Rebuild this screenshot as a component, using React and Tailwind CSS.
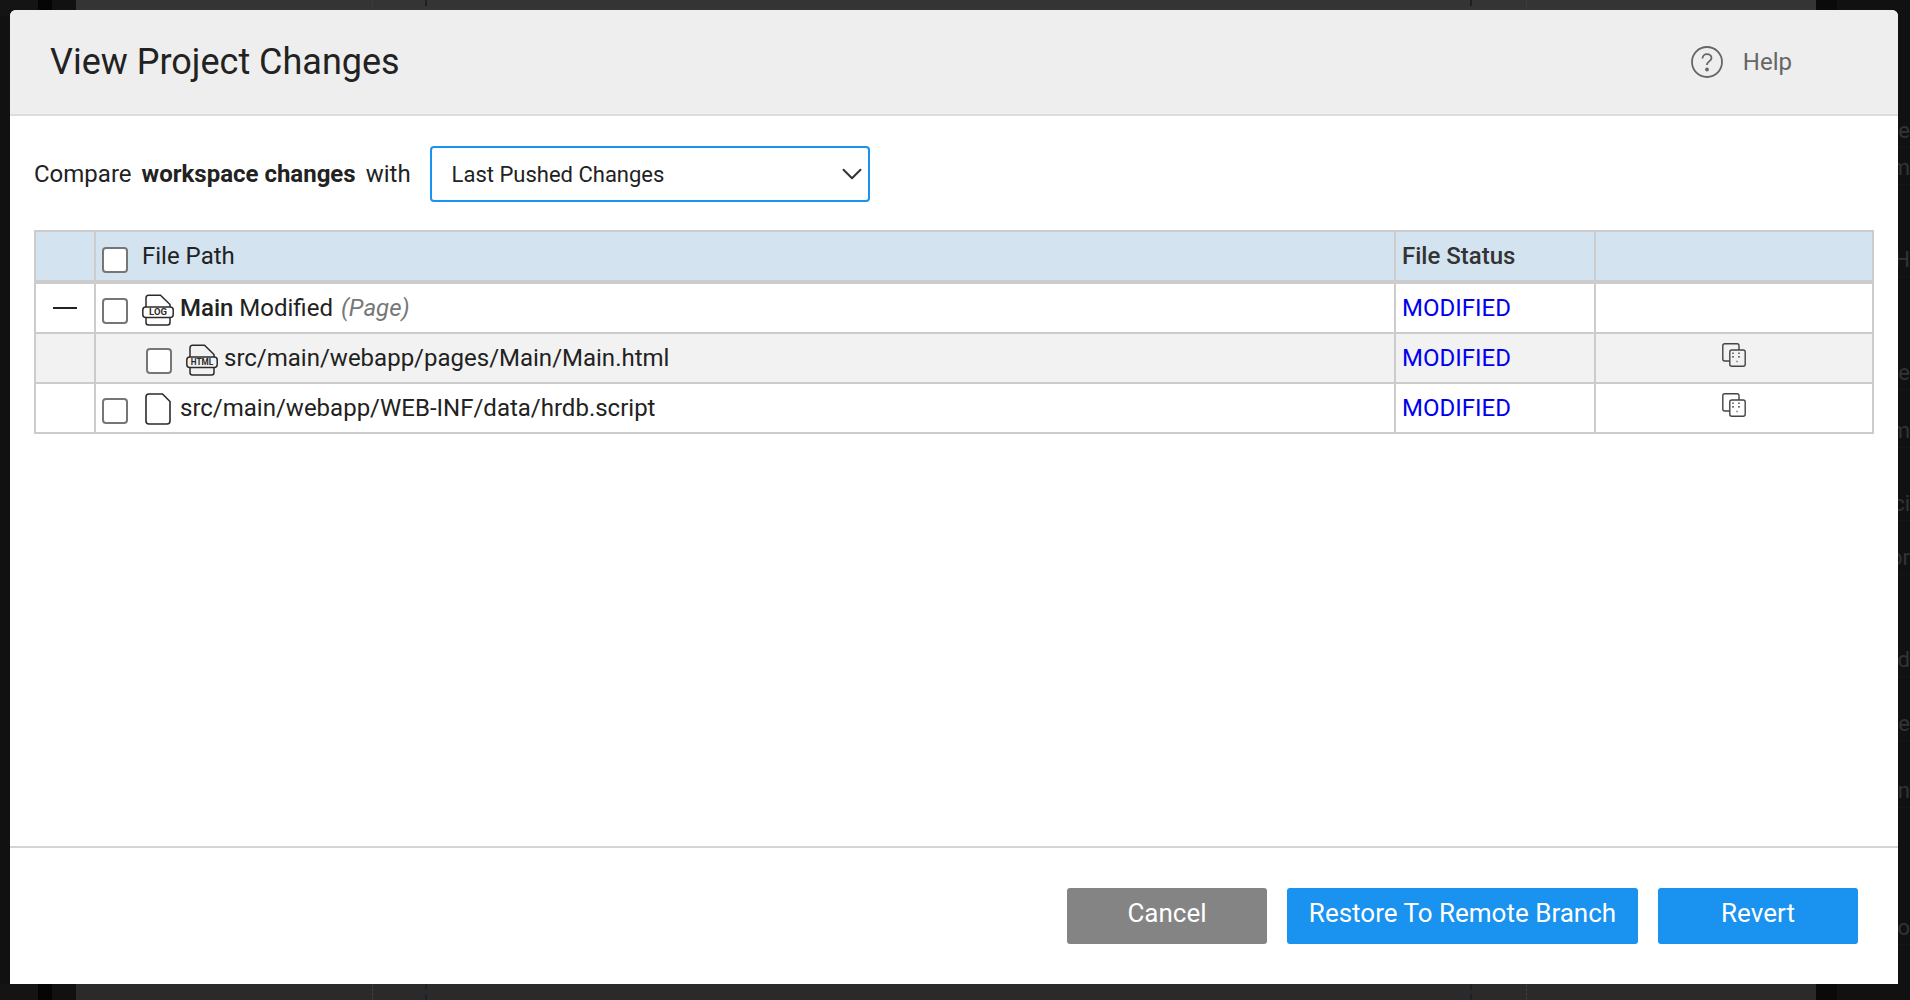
import React from 'react';
import { ChevronDown } from 'lucide-react';

const FONT = "font-['Roboto',sans-serif]";

// list behind the dialog, only its last letters stick out on the right
const BEHIND_ROWS = [
  { h: 'h-[148px]', t: 'e' },
  { h: 'h-[37px]', t: 'm' },
  { h: 'h-[92px]', t: 'H' },
  { h: 'h-[113px]', t: 'ne' },
  { h: 'h-[58px]', t: 'm' },
  { h: 'h-[73px]', t: 'ci' },
  { h: 'h-[54px]', t: 'or' },
  { h: 'h-[102px]', t: 'd' },
  { h: 'h-[64px]', t: 'ce' },
  { h: 'h-[67px]', t: 'ln' },
  { h: 'h-[137px]', t: 'o' },
];

const PageStrip = ({ shade }) => (
  <div className="flex h-[16px]">
    <div className="w-[38px] bg-[#141414]" />
    <div className="w-[14px] bg-[#050505]" />
    <div className="w-[24px] bg-[#111111]" />
    <div className={`flex w-[1740px] ${shade}`}>
      <div className="ml-[296px] border-l border-dashed border-[#3d3d3d]" />
      <div className="ml-[52px] border-l-2 border-dashed border-[#18222c]" />
      <div className="ml-[1043px] border-l-2 border-dashed border-[#18222c]" />
      <div className="ml-[54px] border-l border-dashed border-[#3d3d3d]" />
    </div>
    <div className="w-[21px] bg-[#0a0a0a]" />
    <div className="flex-1 bg-[#111111]" />
  </div>
);

const FileTagIcon = ({ label, textSize }) => (
  <svg width="32" height="32" viewBox="0 0 32 32" fill="none" stroke="#2b2b2b" strokeWidth="1.5" className="shrink-0">
    <path d="M4 13V4C4 2.4 5 1.2 6.5 1.2H18.5L28 10.5V13" />
    <rect x="0.8" y="13" width="30.4" height="10.5" rx="3" />
    <path d="M4 23.5V28.5C4 30 5 31 6.5 31H25.5C27 31 28 30 28 28.5V23.5" />
    <text x="16" y="21.4" textAnchor="middle" fill="#2b2b2b" stroke="none" fontFamily="Roboto, sans-serif" fontWeight="700" fontSize={textSize}>{label}</text>
  </svg>
);

const BlankFileIcon = () => (
  <svg width="26" height="32" viewBox="0 0 26 32" fill="none" stroke="#2b2b2b" strokeWidth="1.6" className="shrink-0">
    <path d="M1 4C1 2 2 1 4 1H17.5L25 8.5V28C25 30 24 31 22 31H4C2 31 1 30 1 28Z" />
  </svg>
);

const CompareIcon = () => (
  <svg width="24" height="24" viewBox="0 0 24 24" fill="none" className="shrink-0">
    <path d="M8 18H2.8C1.6 18 0.8 17.2 0.8 16V2.8C0.8 1.6 1.6 0.8 2.8 0.8H15C16.2 0.8 17 1.6 17 2.8V7" stroke="#444444" strokeWidth="1.4" />
    <path d="M9.8 7H21.2C22.4 7 23.2 7.8 23.2 9V21.2C23.2 22.4 22.4 23.2 21.2 23.2H9.8C8.6 23.2 7.8 22.4 7.8 21.2V9C7.8 7.8 8.6 7 9.8 7Z" stroke="#444444" strokeWidth="1.4" />
    <path d="M11 9.5V16.5M14.5 18.5H15.5M17 9.5V16.5" stroke="#444444" strokeWidth="1.4" strokeDasharray="1.6 2" />
  </svg>
);

const Check = () => (
  <span className="block h-[26px] w-[26px] shrink-0 rounded-[4px] border-2 border-[#767676] bg-white" />
);

const Row = ({ striped, last, first, action, children }) => (
  <div className={`flex border-[#cccccc] ${last ? 'h-[48px]' : 'h-[50px] border-b-[2px]'} ${striped ? 'bg-[#f2f2f2]' : 'bg-white'}`}>
    <div className="flex w-[60px] shrink-0 items-center justify-center border-r-[2px] border-[#cccccc]">
      {first && <span className="block h-[2px] w-[24px] bg-[#222222]" />}
    </div>
    <div className="flex min-w-0 flex-1 items-center border-r-[2px] border-[#cccccc]">{children}</div>
    <div className="flex w-[200px] shrink-0 items-center border-r-[2px] border-[#cccccc] pl-[6px] text-[24px] text-[#0000ee]">MODIFIED</div>
    <div className="flex w-[276px] shrink-0 items-center justify-center pb-[6px]">{action && <CompareIcon />}</div>
  </div>
);

export default function App() {
  return (
    <div className={`relative flex h-screen w-full flex-col justify-between overflow-hidden bg-[#111111] ${FONT}`}>
      {/* page behind the dialog */}
      <PageStrip shade="bg-[#343434]" />
      <PageStrip shade="bg-[#2a2a2a]" />

      <div className="absolute right-0 top-0 w-[12px] overflow-hidden text-[22px] text-[#333333]">
        {BEHIND_ROWS.map((row, i) => (
          <div key={i} className={`flex items-end justify-end border-b border-[#161616] ${row.h}`}>
            <span className="whitespace-nowrap">{row.t}</span>
          </div>
        ))}
      </div>

      {/* dialog */}
      <div className="absolute left-[10px] top-[10px] flex h-[974px] w-[1888px] flex-col rounded-t-[6px] bg-white text-[#222222]">
        <header className="flex h-[106px] shrink-0 items-center justify-between rounded-t-[6px] border-b-[2px] border-[#dddddd] bg-[#eeeeee] pl-[40px] pr-[106px]">
          <h1 className="text-[36px] font-normal leading-none">View Project Changes</h1>
          <div className="flex items-center gap-[20px] text-[24px] text-[#666666]">
            <svg width="32" height="32" viewBox="0 0 32 32" fill="none" stroke="#666666" strokeWidth="1.8">
              <circle cx="16" cy="16" r="15" />
              <path d="M11.5 12.5C11.5 9.8 13.5 8.2 16 8.2C18.5 8.2 20.5 9.8 20.5 12C20.5 15.2 16 15.2 16 19" />
              <circle cx="16" cy="23.5" r="1" fill="#666666" />
            </svg>
            <span>Help</span>
          </div>
        </header>

        <section className="flex flex-1 flex-col px-[24px] pt-[30px]">
          <div className="flex h-[56px] items-center gap-[10px] text-[24px]">
            <span>Compare</span>
            <strong className="font-bold">workspace changes</strong>
            <span>with</span>
            <div className="ml-[9px] flex h-[56px] w-[440px] items-center justify-between rounded-[4px] border-[2px] border-[#1992f0] pl-[20px] text-[22px]">
              <span>Last Pushed Changes</span>
              <ChevronDown size={34} strokeWidth={1.4} className="-mr-px text-[#333333]" />
            </div>
          </div>

          <div className="mt-[28px] w-[1840px] border-[2px] border-[#cccccc]">
            <div className="flex h-[52px] border-b-[4px] border-[#cccccc] bg-[#d3e4f0]">
              <div className="w-[60px] shrink-0 border-r-[2px] border-[#cccccc]" />
              <div className="flex flex-1 items-center gap-[14px] border-r-[2px] border-[#cccccc] pl-[6px] text-[24px]">
                <span className="mt-[8px]"><Check /></span>
                <span>File Path</span>
              </div>
              <div className="flex w-[200px] shrink-0 items-center border-r-[2px] border-[#cccccc] pl-[6px] text-[24px] font-medium text-[#333333]">File Status</div>
              <div className="w-[276px] shrink-0" />
            </div>

            <Row first>
              <div className="flex items-center pl-[6px] text-[24px]">
                <span className="mt-[6px]"><Check /></span>
                <span className="ml-[14px] mr-[6px] mt-[3px]"><FileTagIcon label="LOG" textSize="9.5" /></span>
                <span><b className="font-medium">Main</b> Modified <i className="ml-[2px] text-[#777777]">(Page)</i></span>
              </div>
            </Row>
            <Row striped action>
              <div className="flex items-center pl-[50px] text-[24px]">
                <span className="mt-[6px]"><Check /></span>
                <span className="ml-[14px] mr-[6px] mt-[3px]"><FileTagIcon label="HTML" textSize="8.2" /></span>
                <span>src/main/webapp/pages/Main/Main.html</span>
              </div>
            </Row>
            <Row last action>
              <div className="flex items-center pl-[6px] text-[24px]">
                <span className="mt-[6px]"><Check /></span>
                <span className="ml-[17px] mr-[9px] mt-[2px]"><BlankFileIcon /></span>
                <span>src/main/webapp/WEB-INF/data/hrdb.script</span>
              </div>
            </Row>
          </div>
        </section>

        <footer className="flex h-[138px] shrink-0 items-start justify-end gap-[20px] border-t-[2px] border-[#d4d4d4] pr-[40px] pt-[40px] text-[26px] text-white">
          <button className="h-[56px] w-[200px] rounded-[3px] bg-[#848484] pb-[5px]">Cancel</button>
          <button className="h-[56px] w-[351px] rounded-[3px] bg-[#1992f0] pb-[5px]">Restore To Remote Branch</button>
          <button className="h-[56px] w-[200px] rounded-[3px] bg-[#1992f0] pb-[5px]">Revert</button>
        </footer>
      </div>
    </div>
  );
}
